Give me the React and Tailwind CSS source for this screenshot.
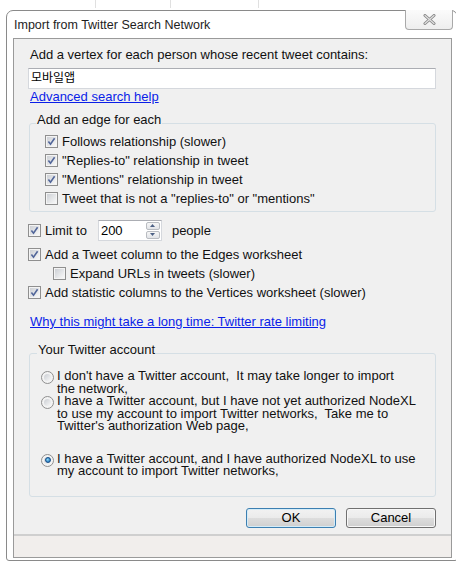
import React from "react"

// Windows 7 style check box
const Check = ({ on }) => (
  <span className="relative flex h-[13px] w-[13px] shrink-0 border border-[#8f8f8f] bg-[#f4f4f4] p-px">
    <span className="flex-1 bg-gradient-to-br from-[#cdd0d5] to-[#f8f8f8]" />
    {on && (
      <svg className="absolute inset-0" width="11" height="11" viewBox="0 0 11 11">
        <path d="M2.4 5.6 L4.5 8.2 L8.6 2.2" fill="none" stroke="#52669a" strokeWidth="1.6" />
      </svg>
    )}
  </span>
)

const Radio = ({ on }) => (
  <span className="flex h-[13px] w-[13px] shrink-0 rounded-full border border-[#8f8f8f] bg-[#f3f3f3] p-[2px]">
    <span className="flex flex-1 items-center justify-center rounded-full bg-gradient-to-br from-[#cbced3] to-[#f8f8f8]">
      {on && (
        <span className="h-[6px] w-[6px] rounded-full border border-[#164c86] bg-[radial-gradient(circle_at_40%_40%,#8fdcf8,#2a7fc2_70%)]" />
      )}
    </span>
  </span>
)

const CheckRow = ({ on, children, className = "" }) => (
  <div className={`flex h-[19px] items-center gap-[4px] ${className}`}>
    <Check on={on} />
    <span>{children}</span>
  </div>
)

const RadioRow = ({ on, lines, className = "" }) => (
  <div className={`flex items-start gap-[3px] ${className}`}>
    <span className="mt-[1px]">
      <Radio on={on} />
    </span>
    <div className="leading-[12.5px]">
      {lines.map((l) => (
        <span key={l} className="block whitespace-pre">
          {l}
        </span>
      ))}
    </div>
  </div>
)

const Button = ({ focused, children }) => (
  <button
    className={`h-[20px] w-[90px] rounded-[3px] border bg-[linear-gradient(#f2f2f2,#ebebeb_48%,#dddddd_52%,#cfcfcf)] text-[13px] leading-none text-black ${
      focused ? "border-[#3c7fb1] shadow-[inset_0_0_0_1px_#d4ecf8]" : "border-[#707070] shadow-[inset_0_0_0_1px_#f8f8f8]"
    }`}
  >
    {children}
  </button>
)

export default function App() {
  return (
    <div className="h-[562px] w-[456px] overflow-hidden bg-white font-['Liberation_Sans','Noto_Sans_CJK_KR',sans-serif] text-[13px] leading-[15px] text-[#111]">
      {/* sheet grid lines behind the dialog */}
      <div className="flex h-[10px]">
        <div className="h-[8px] w-[96px] border-r border-[#e0e0e0]" />
        <div className="h-[8px] w-[75px] border-r border-[#e0e0e0]" />
        <div className="h-[8px] w-[88px] border-r border-[#e0e0e0]" />
      </div>

      <div className="ml-[6px] flex h-[551px] w-[452px] flex-col rounded-t-[7px] rounded-b-[3px] border border-[#8a8a8a] bg-white">
        {/* title bar */}
        <div className="flex h-[27px] items-start justify-between">
          <span className="ml-[7px] mt-[7px] text-[12.5px] text-[#1e1e1e]">Import from Twitter Search Network</span>
          <button className="-mt-px mr-[4px] flex h-[20px] w-[48px] items-center justify-center rounded-b-[4px] border border-t-0 border-[#a9a9a9] bg-gradient-to-b from-[#fbfbfb] to-[#eeeeee]">
            <svg width="13" height="11" viewBox="0 0 13 11">
              <path d="M2 1.5 L11 9.5 M11 1.5 L2 9.5" stroke="#858585" strokeWidth="3" strokeLinecap="round" />
              <path d="M2 1.5 L11 9.5 M11 1.5 L2 9.5" stroke="#e2e2e2" strokeWidth="1.2" strokeLinecap="round" />
            </svg>
          </button>
        </div>

        {/* client area */}
        <div className="ml-[6px] flex h-[520px] w-[439px] flex-col border border-[#9a9a9a] bg-[#f0f0f0]">
          <div className="flex flex-col px-[14px] pt-[8px]">
            <span className="ml-[2px]">Add a vertex for each person whose recent tweet contains:</span>
            <div className="mt-[6px] flex h-[21px] w-[408px] items-center border border-[#d5d8dd] border-t-[#abadb3] bg-white pl-[2px] text-[12px] text-black">
              모바일앱
            </div>
            <a className="ml-[2px] self-start text-[#0a1ee8] underline">Advanced search help</a>

            <fieldset className="ml-px mt-[8px] w-[407px] rounded-[3px] border border-[#d5dfe5] pb-[3px] pl-[15px]">
              <legend className="-ml-[9px] px-px pb-[7px] leading-[15px]">Add an edge for each</legend>
              <div className="-mt-[2px]">
                <CheckRow on className="h-[18.5px]">Follows relationship (slower)</CheckRow>
                <CheckRow on className="h-[18.5px]">"Replies-to" relationship in tweet</CheckRow>
                <CheckRow on className="h-[18.5px]">"Mentions" relationship in tweet</CheckRow>
                <CheckRow className="h-[18.5px]">Tweet that is not a "replies-to" or "mentions"</CheckRow>
              </div>
            </fieldset>

            <div className="mt-[7px] flex h-[22px] items-center">
              <Check on />
              <span className="ml-[4px]">Limit to</span>
              <div className="ml-[11px] flex h-[21px] w-[64px] items-center border border-[#d5d8dd] border-t-[#abadb3] bg-white pl-[2px] pr-px">
                <span className="flex-1 text-black">200</span>
                <div className="flex h-[17px] w-[14px] flex-col gap-px">
                  <span className="flex flex-1 items-center justify-center rounded-[2px] border border-[#b9bcc1] bg-gradient-to-b from-[#f6f6f6] to-[#e2e4e8]">
                    <svg width="5" height="3" viewBox="0 0 5 3"><path d="M0 3 L2.5 0 L5 3Z" fill="#4d6185" /></svg>
                  </span>
                  <span className="flex flex-1 items-center justify-center rounded-[2px] border border-[#b9bcc1] bg-gradient-to-b from-[#f6f6f6] to-[#e2e4e8]">
                    <svg width="5" height="3" viewBox="0 0 5 3"><path d="M0 0 L2.5 3 L5 0Z" fill="#4d6185" /></svg>
                  </span>
                </div>
              </div>
              <span className="ml-[10px]">people</span>
            </div>
            <CheckRow on className="mt-[4px]">Add a Tweet column to the Edges worksheet</CheckRow>
            <CheckRow className="ml-[25px]">Expand URLs in tweets (slower)</CheckRow>
            <CheckRow on>Add statistic columns to the Vertices worksheet (slower)</CheckRow>

            <a className="ml-[2px] mt-[12px] self-start text-[#0a1ee8] underline">
              Why this might take a long time: Twitter rate limiting
            </a>

            <fieldset className="ml-px mt-[13px] w-[407px] rounded-[3px] border border-[#d5dfe5] pb-[18px] pl-[11px]">
              <legend className="-ml-[4px] px-px pb-[7px] leading-[15px]">Your Twitter account</legend>
              <RadioRow
                className="mt-[6px]"
                lines={["I don't have a Twitter account,  It may take longer to import", "the network,"]}
              />
              <RadioRow
                lines={[
                  "I have a Twitter account, but I have not yet authorized NodeXL",
                  "to use my account to import Twitter networks,  Take me to",
                  "Twitter's authorization Web page,",
                ]}
              />
              <RadioRow
                on
                className="mt-[20px]"
                lines={["I have a Twitter account, and I have authorized NodeXL to use", "my account to import Twitter networks,"]}
              />
            </fieldset>

            <div className="mr-px mt-[11px] flex justify-end gap-[10px]">
              <Button focused>OK</Button>
              <Button>Cancel</Button>
            </div>
          </div>

          {/* status strip */}
          <div className="mt-[6px] flex-1 border-t-2 border-[#cfcfcf] bg-[#f1eeec]" />
        </div>
      </div>
    </div>
  )
}
